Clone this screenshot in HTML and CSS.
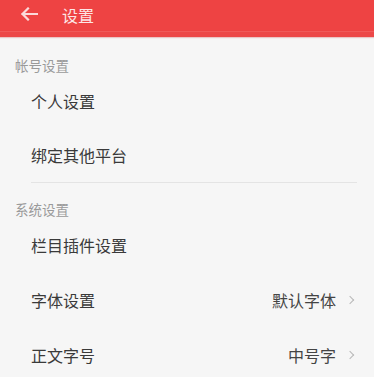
FILE: index.html
```html
<!DOCTYPE html>
<html lang="zh">
<head>
<meta charset="utf-8">
<link rel="stylesheet" href="styles.css">
</head>
<body>
<header class="bar">
  <svg class="back" width="18" height="14" viewBox="0 0 18 14"><path d="M17 7H2.5M8 1.5L2.5 7L8 12.5" fill="none" stroke="#fbd9d9" stroke-width="2.2" stroke-linecap="square"/></svg>
  <span class="title">设置</span>
</header>
<main class="list">
  <div class="label">帐号设置</div>
  <div class="row"><span>个人设置</span></div>
  <div class="row last"><span>绑定其他平台</span></div>
  <div class="label">系统设置</div>
  <div class="row"><span>栏目插件设置</span></div>
  <div class="row"><span>字体设置</span><span class="val">默认字体<i class="chev"></i></span></div>
  <div class="row"><span>正文字号</span><span class="val">中号字<i class="chev"></i></span></div>
</main>
</body>
</html>
```
FILE: styles.css
```css
html, body { margin: 0; padding: 0; }
body {
  width: 374px;
  height: 377px;
  overflow: hidden;
  background: #f6f6f6;
  font-family: "Noto Sans CJK SC", "Noto Sans", sans-serif;
}
.bar {
  height: 37px;
  box-sizing: border-box;
  padding-top: 5px;
  background: #ee4343;
  display: flex;
  align-items: flex-start;
  box-shadow: inset 0 -5px 0 #ec4848, inset 0 -6px 0 #f05a5a, 0 1px 1px rgba(200, 60, 60, 0.25);
}
.back { margin-left: 20px; margin-top: 2px; }
.title {
  margin-left: 24px;
  color: #fde6e6;
  font-size: 16px;
  line-height: 20px;
}
.list { padding-top: 2px; }
.label {
  padding: 18px 0 0 15px;
  font-size: 13.5px;
  line-height: 16px;
  color: #9a9a9a;
}
.row {
  height: 55px;
  margin-left: 31px;
  margin-right: 17px;
  display: flex;
  align-items: center;
  justify-content: space-between;
  font-size: 16px;
  color: #3a3a3a;
}
.row.last { border-bottom: 1px solid #e4e4e4; height: 54px; }
.val {
  display: flex;
  align-items: center;
  color: #444;
}
.chev {
  width: 5px;
  height: 5px;
  border-top: 1.3px solid #b8b8b8;
  border-right: 1.3px solid #b8b8b8;
  transform: rotate(45deg);
  margin-left: 11px;
  margin-right: 4px;
}
```
